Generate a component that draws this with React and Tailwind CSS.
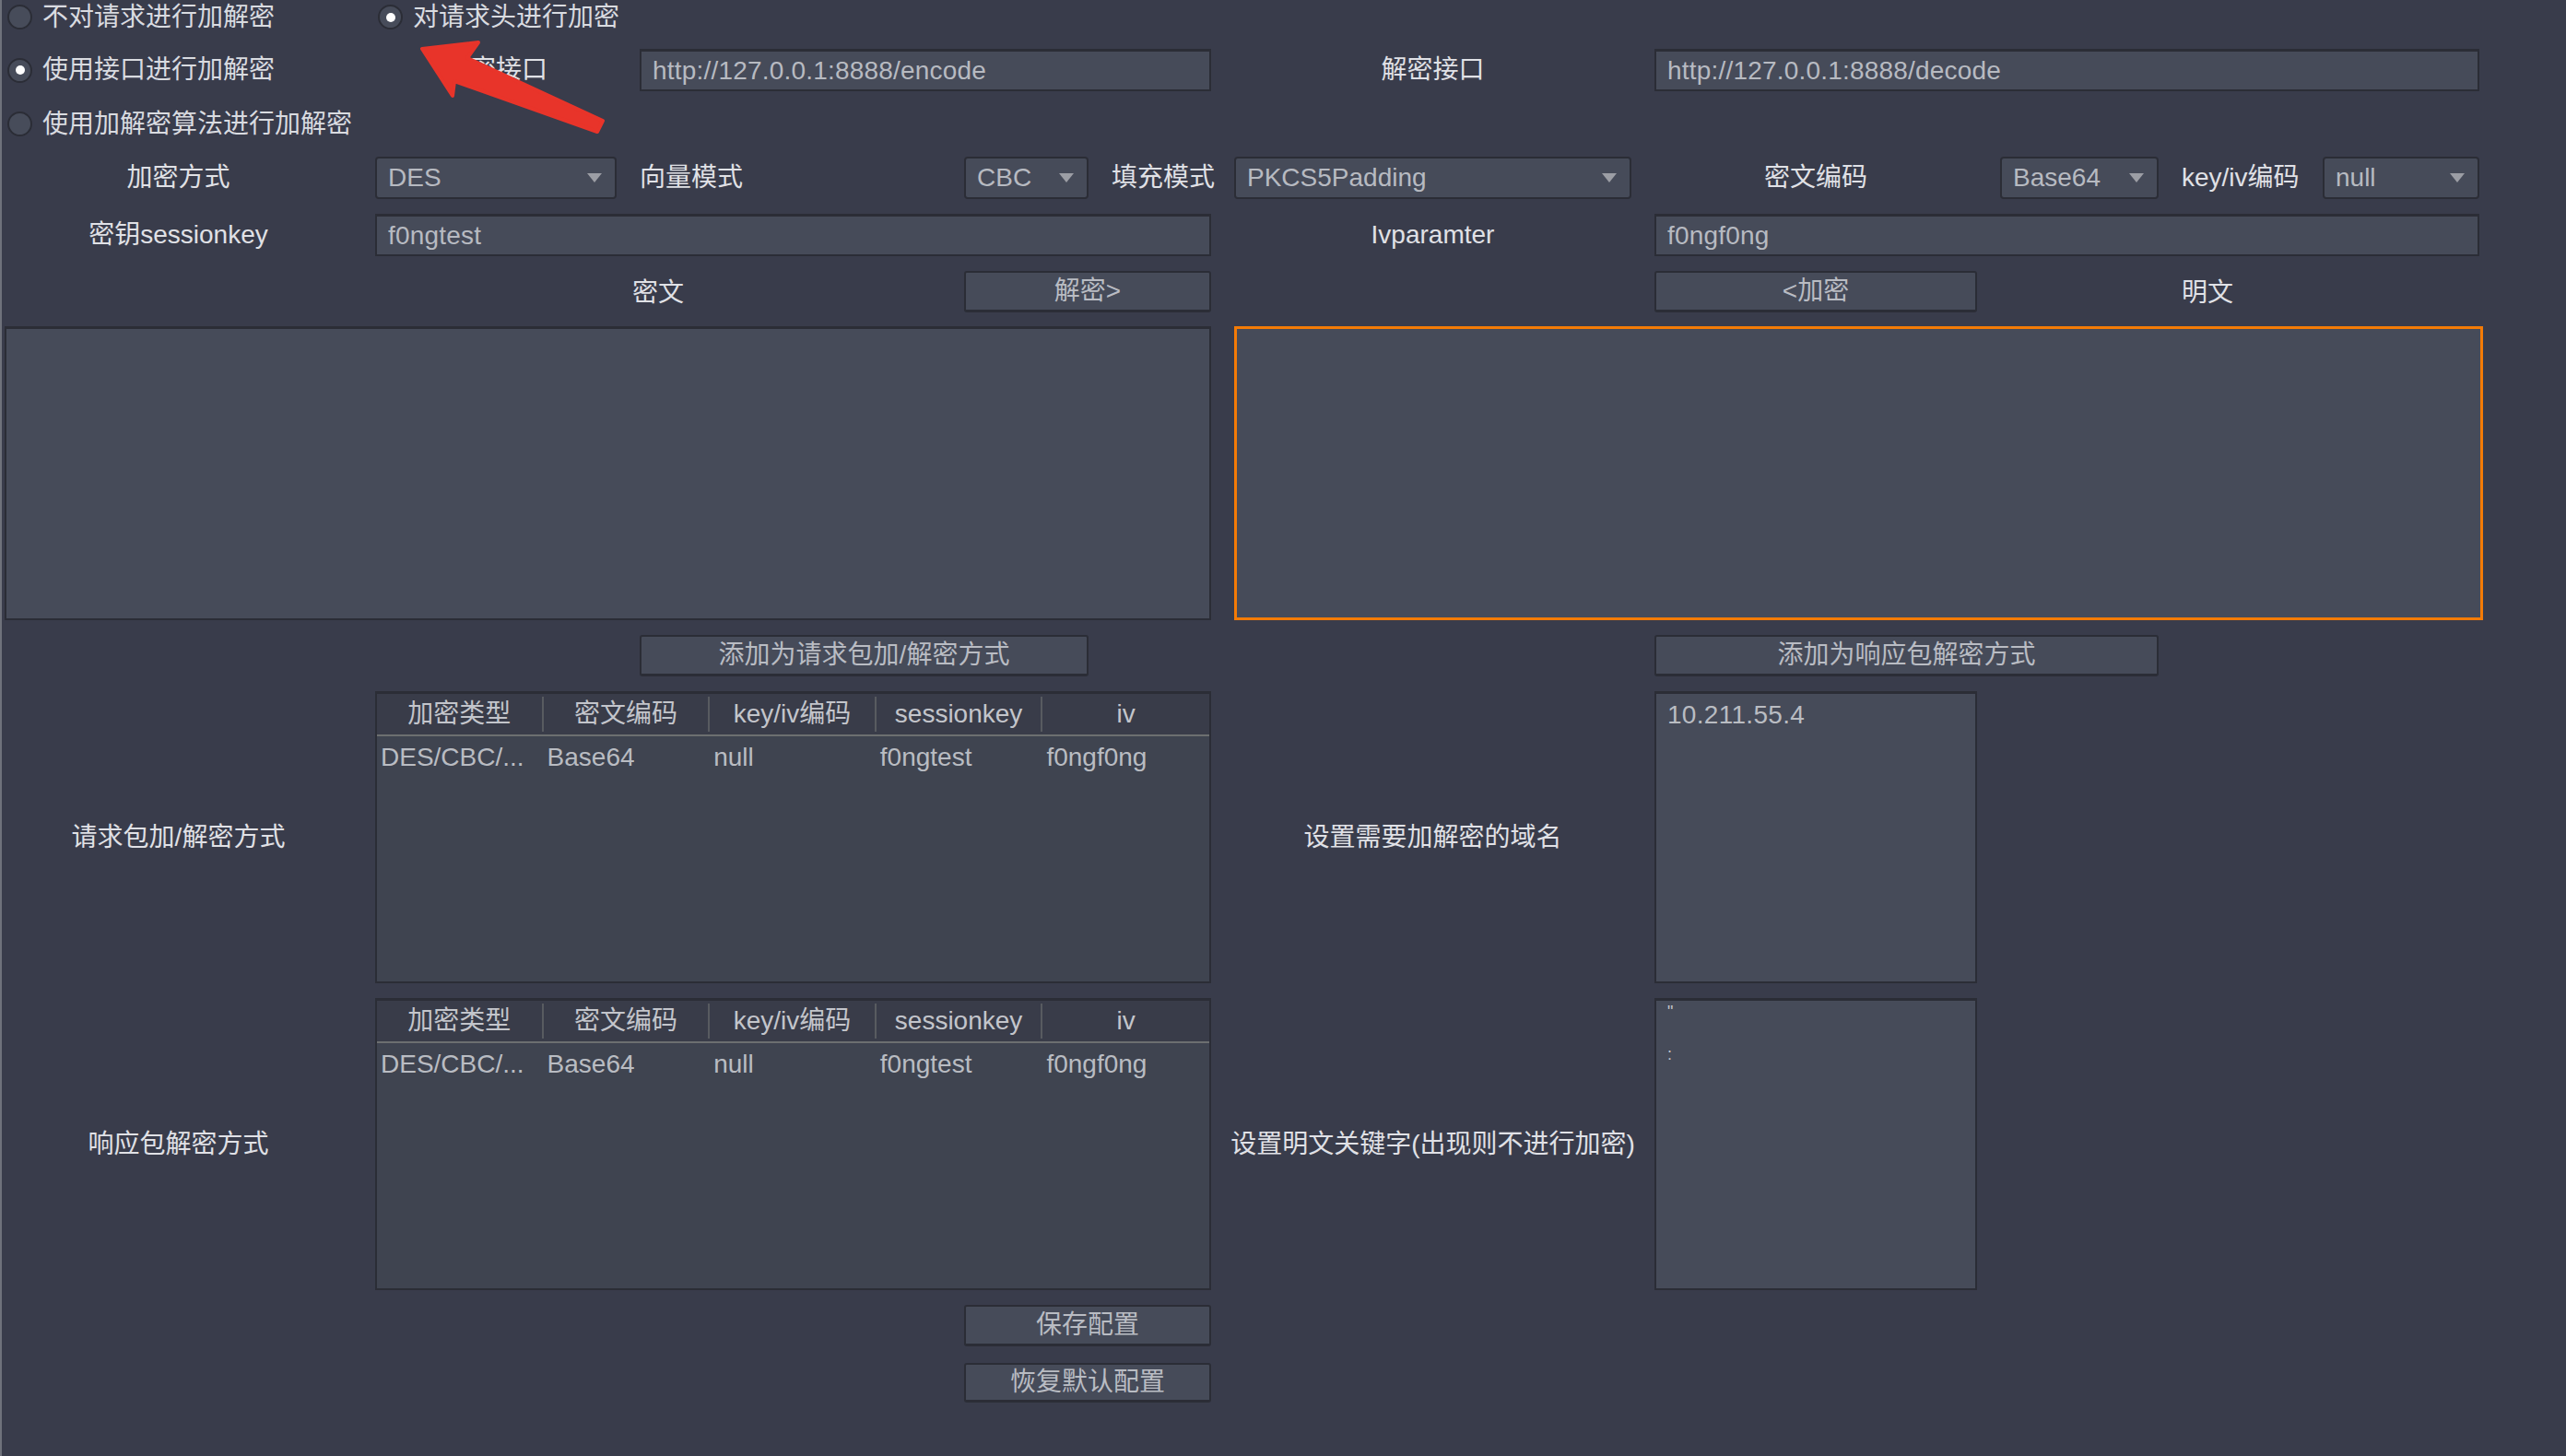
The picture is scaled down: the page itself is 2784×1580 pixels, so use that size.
import React from 'react'

const font = { fontFamily: '"Liberation Sans", "Noto Sans CJK SC", sans-serif' }

const Radio = ({ checked, label, className = '' }) => (
  <div className={`flex items-center gap-[11px] pl-[3px] whitespace-nowrap ${className}`}>
    <div className="w-[27px] h-[27px] shrink-0 rounded-full bg-[#474c5a] border-2 border-[#2b2d36] flex items-center justify-center">
      {checked && <div className="w-[10px] h-[10px] rounded-full bg-white" />}
    </div>
    <span className="text-[#d9dbe0]">{label}</span>
  </div>
)

const Label = ({ children, className = '' }) => (
  <div className={`flex items-center justify-center whitespace-nowrap text-[#e0e1e6] ${className}`}>{children}</div>
)

const Field = ({ children, className = '' }) => (
  <div className={`flex items-center px-3 bg-[#464b59] border-2 border-t-[3px] border-[#2b2d36] text-[#b7bac1] whitespace-nowrap tracking-[0.2px] ${className}`}>
    {children}
  </div>
)

const Select = ({ value, className = '' }) => (
  <div className={`flex items-center justify-between pl-3 pr-[14px] bg-[#464b59] border-2 border-[#2b2d36] rounded-[4px] text-[#b7bac1] ${className}`}>
    <span>{value}</span>
    <svg width="16" height="11" viewBox="0 0 16 11">
      <path d="M0 0 L16 0 L8 10 Z" fill="#9c9ea5" />
    </svg>
  </div>
)

const Button = ({ children, className = '' }) => (
  <div className={`flex items-center justify-center bg-[#464b59] border-2 border-b-[3px] border-[#2b2d36] rounded-[3px] text-[#b9bcc3] ${className}`}>
    {children}
  </div>
)

const cols = ['加密类型', '密文编码', 'key/iv编码', 'sessionkey', 'iv']
const row = ['DES/CBC/...', 'Base64', 'null', 'f0ngtest', 'f0ngf0ng']

const Table = ({ className = '' }) => (
  <div className={`flex flex-col bg-[#3f4450] border-2 border-t-[3px] border-[#2b2d36] ${className}`}>
    <div className="grid grid-cols-5 h-[46px] bg-[#393c49] border-b-2 border-[#6c6f70]">
      {cols.map((c, i) => (
        <div
          key={c}
          className={`flex items-center justify-center text-[#c3c5cb] my-[3px] ${i < 4 ? 'border-r-2 border-[#585b60]' : ''}`}
        >
          {c}
        </div>
      ))}
    </div>
    <div className="grid grid-cols-5 h-[46px]">
      {row.map((c, i) => (
        <div key={i} className="flex items-center pl-[4px] text-[#b9bcc2] whitespace-nowrap">{c}</div>
      ))}
    </div>
  </div>
)

const Arrow = () => (
  <svg className="absolute left-0 top-0 pointer-events-none" width="2784" height="1580">
    <polygon
      points="456,53 517,46 505,63 652,131 646,143 491,88 489,104"
      fill="#e8342a"
      stroke="#e8342a"
      strokeWidth="4"
      strokeLinejoin="round"
    />
  </svg>
)

export default function App() {
  return (
    <div
      style={font}
      className="relative w-[2784px] h-[1580px] overflow-hidden bg-[#393c4b] border-l-2 border-[#6f727b] pl-[3px] text-[28px] leading-none"
    >
      <div className="grid grid-cols-[377px_262px_327px_135px_108px_431px_350px_172px_128px_170px] grid-rows-[37px_46px_39px_46px_46px_45px_318px_45px_317px_317px_45px_45px] gap-x-[25px] gap-y-4">
        {/* radios */}
        <Radio className="col-start-1 row-start-1" label="不对请求进行加解密" />
        <Radio className="col-start-2 col-span-3 row-start-1" checked label="对请求头进行加密" />
        <Radio className="col-start-1 row-start-2" checked label="使用接口进行加解密" />
        <Radio className="col-start-1 row-start-3" label="使用加解密算法进行加解密" />

        {/* interface urls */}
        <Label className="col-start-2 row-start-2">加密接口</Label>
        <Field className="col-start-3 col-span-3 row-start-2">http://127.0.0.1:8888/encode</Field>
        <Label className="col-start-6 row-start-2">解密接口</Label>
        <Field className="col-start-7 col-span-4 row-start-2">http://127.0.0.1:8888/decode</Field>

        {/* algorithm options */}
        <Label className="col-start-1 row-start-4">加密方式</Label>
        <Select className="col-start-2 row-start-4" value="DES" />
        <Label className="col-start-3 row-start-4 !justify-start">向量模式</Label>
        <Select className="col-start-4 row-start-4" value="CBC" />
        <Label className="col-start-5 row-start-4 !justify-start">填充模式</Label>
        <Select className="col-start-6 row-start-4" value="PKCS5Padding" />
        <Label className="col-start-7 row-start-4">密文编码</Label>
        <Select className="col-start-8 row-start-4" value="Base64" />
        <Label className="col-start-9 row-start-4 !justify-start">key/iv编码</Label>
        <Select className="col-start-10 row-start-4" value="null" />

        <Label className="col-start-1 row-start-5">密钥sessionkey</Label>
        <Field className="col-start-2 col-span-4 row-start-5">f0ngtest</Field>
        <Label className="col-start-6 row-start-5">Ivparamter</Label>
        <Field className="col-start-7 col-span-4 row-start-5">f0ngf0ng</Field>

        <Label className="col-start-2 col-span-2 row-start-6 pt-[3px]">密文</Label>
        <Button className="col-start-4 col-span-2 row-start-6">解密&gt;</Button>
        <Button className="col-start-7 row-start-6">&lt;加密</Button>
        <Label className="col-start-9 row-start-6 !justify-start pt-[3px]">明文</Label>

        {/* text areas */}
        <div className="col-start-1 col-span-5 row-start-7 -mt-px bg-[#464b59] border-2 border-t-[3px] border-[#2b2d36]" />
        <div className="col-start-6 col-span-5 row-start-7 -mt-px -mr-1 bg-[#464b59] border-[3px] border-[#f47b06]" />

        <Button className="col-start-3 col-span-2 row-start-8">添加为请求包加/解密方式</Button>
        <Button className="col-start-7 col-span-2 row-start-8">添加为响应包解密方式</Button>

        {/* request methods */}
        <Label className="col-start-1 row-start-9">请求包加/解密方式</Label>
        <Table className="col-start-2 col-span-4 row-start-9" />
        <Label className="col-start-6 row-start-9">设置需要加解密的域名</Label>
        <div className="col-start-7 row-start-9 bg-[#464b59] border-2 border-t-[3px] border-[#2b2d36] px-3 pt-[9px] text-[#b9bcc2] tracking-[0.3px]">
          10.211.55.4
        </div>

        {/* response methods */}
        <Label className="col-start-1 row-start-10">响应包解密方式</Label>
        <Table className="col-start-2 col-span-4 row-start-10" />
        <Label className="col-start-6 row-start-10">设置明文关键字(出现则不进行加密)</Label>
        <div className="col-start-7 row-start-10 flex flex-col bg-[#464b59] border-2 border-t-[3px] border-[#2b2d36] pl-[12px] pt-[2px] text-[18px] leading-[20px] text-[#c2c4ca]">
          <div>"</div>
          <div className="mt-[26px]">:</div>
        </div>

        <Button className="col-start-4 col-span-2 row-start-11">保存配置</Button>
        <Button className="col-start-4 col-span-2 row-start-12 mt-[2px]">恢复默认配置</Button>
      </div>
      <Arrow />
    </div>
  )
}
